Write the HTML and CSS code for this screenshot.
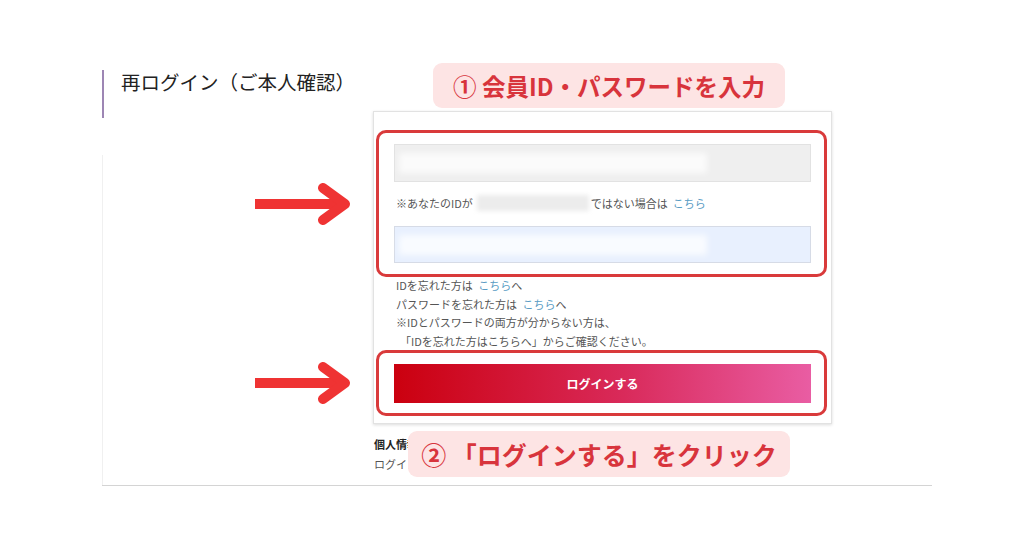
FILE: index.html
```html
<!DOCTYPE html>
<html lang="ja">
<head>
  <meta charset="UTF-8">
  <title>再ログイン（ご本人確認）</title>
  <link rel="stylesheet" href="styles.css">
</head>
<body>

  <div class="page">
    <div class="section">

      <div class="side">
        <h1 class="heading">再ログイン（ご本人確認）</h1>
        <div class="side-rule"></div>
      </div>

      <div class="main">
        <form class="card" onsubmit="return false;">
          <div class="field field-id"><span class="blur"></span></div>
          <p class="note">※あなたのIDが<span class="blur-id"></span>ではない場合は <a href="#">こちら</a></p>
          <div class="field field-pass"><span class="blur"></span></div>

          <ul class="help">
            <li>IDを忘れた方は <a href="#">こちら</a>へ</li>
            <li>パスワードを忘れた方は <a href="#">こちら</a>へ</li>
            <li>※IDとパスワードの両方が分からない方は、</li>
            <li class="indent">「IDを忘れた方はこちらへ」からご確認ください。</li>
          </ul>

          <button class="login-btn" type="submit">ログインする</button>
        </form>

        <div class="privacy">
          <p class="privacy-title">個人情報の取り扱い</p>
          <p class="privacy-text">ログインにより同意したものとみなします。</p>
        </div>
      </div>

      <!-- annotations drawn over the screenshot -->
      <div class="mark mark-fields"></div>
      <div class="mark mark-button"></div>

      <div class="tag tag-1">① 会員ID・パスワードを入力</div>
      <div class="tag tag-2">② 「ログインする」をクリック</div>

      <svg class="arrow arrow-1" viewBox="0 0 96 44" width="96" height="44">
        <line x1="0" y1="22" x2="86" y2="22" />
        <polyline points="68,6 90,22 68,38" />
      </svg>
      <svg class="arrow arrow-2" viewBox="0 0 96 44" width="96" height="44">
        <line x1="0" y1="22" x2="86" y2="22" />
        <polyline points="68,6 90,22 68,38" />
      </svg>

    </div>
  </div>

</body>
</html>
```

FILE: styles.css
```css
* {
  box-sizing: border-box;
}

html, body {
  margin: 0;
  background: #fff;
  font-family: "Noto Sans CJK JP", "Noto Sans", sans-serif;
  color: #333;
}

.page {
  padding: 70px 0 0 102px;
}

.section {
  position: relative;
  display: flex;
  width: 830px;
  border-bottom: 1px solid #d4d4d4;
}

/* left column */
.side {
  display: flex;
  flex-direction: column;
  width: 271px;
}

.heading {
  margin: 0;
  height: 48px;
  padding-left: 17px;
  border-left: 2px solid #9d86b4;
  font-size: 19.5px;
  font-weight: 400;
  line-height: 24px;
  color: #222;
}

.side-rule {
  flex: 1;
  margin-top: 37px;
  border-left: 1px solid #f0f0f0;
}

/* form column */
.main {
  width: 459px;
  padding-top: 41px;
  padding-bottom: 11px;
}

.card {
  height: 313px;
  padding: 32px 20px 0 20px;
  background: #fff;
  border: 1px solid #e2e2e2;
  box-shadow: 0 1px 3px rgba(0, 0, 0, 0.14);
}

.field {
  display: flex;
  align-items: center;
  height: 38px;
  padding-left: 4px;
  border: 1px solid #e2e2e2;
}

.field-id {
  background: #efefef;
}

.field-pass {
  height: 37px;
  background: #e8f0fe;
  border-color: #d6dbe6;
}

.field .blur {
  display: block;
  width: 308px;
  height: 20px;
  background: rgba(255, 255, 255, 0.75);
  filter: blur(3px);
}

.note {
  display: flex;
  align-items: center;
  margin: 0;
  height: 44px;
  padding-left: 2px;
  padding-bottom: 2px;
  font-size: 11px;
  color: #555;
}

.blur-id {
  display: inline-block;
  width: 112px;
  height: 16px;
  margin: 0 2px 0 4px;
  background: #ececec;
  filter: blur(2px);
}

.note a {
  margin-left: 5px;
}

a {
  color: #5a9cc4;
  text-decoration: none;
}

.help {
  margin: 0;
  padding: 13px 0 0 2px;
  list-style: none;
  font-size: 11px;
  line-height: 18.7px;
  color: #555;
}

.help a {
  margin-left: 3px;
}

.help .indent {
  padding-left: 4px;
}

.login-btn {
  display: block;
  width: 100%;
  height: 39px;
  margin-top: 13px;
  border: none;
  background: linear-gradient(90deg, #cb000f 0%, #d92a5a 55%, #e95da3 100%);
  color: #fff;
  font-family: inherit;
  font-size: 12px;
  font-weight: 700;
  cursor: pointer;
}

.privacy {
  padding: 10px 0 0 1px;
  font-size: 11px;
  line-height: 20px;
}

.privacy p {
  margin: 0;
}

.privacy-title {
  font-weight: 700;
  color: #222;
}

.privacy-text {
  color: #555;
}

/* annotations */
.mark {
  position: absolute;
  left: 274px;
  width: 451px;
  border: 3px solid #d93a3b;
  border-radius: 10px;
}

.mark-fields {
  top: 60px;
  height: 147px;
}

.mark-button {
  top: 280px;
  height: 66px;
}

.tag {
  position: absolute;
  display: flex;
  align-items: center;
  justify-content: center;
  background: #fde4e4;
  border-radius: 9px;
  color: #d8343c;
  font-weight: 700;
  white-space: nowrap;
}

.tag-1 {
  left: 331px;
  top: -7px;
  width: 352px;
  height: 45px;
  font-size: 23.5px;
}

.tag-2 {
  left: 306px;
  top: 361px;
  width: 382px;
  height: 46px;
  font-size: 25px;
}

.arrow {
  position: absolute;
  left: 153px;
  fill: none;
  stroke: #ef3333;
  stroke-width: 10;
  stroke-linejoin: round;
}

.arrow polyline {
  stroke-linecap: round;
}

.arrow-1 {
  top: 112px;
}

.arrow-2 {
  top: 291px;
}
```
